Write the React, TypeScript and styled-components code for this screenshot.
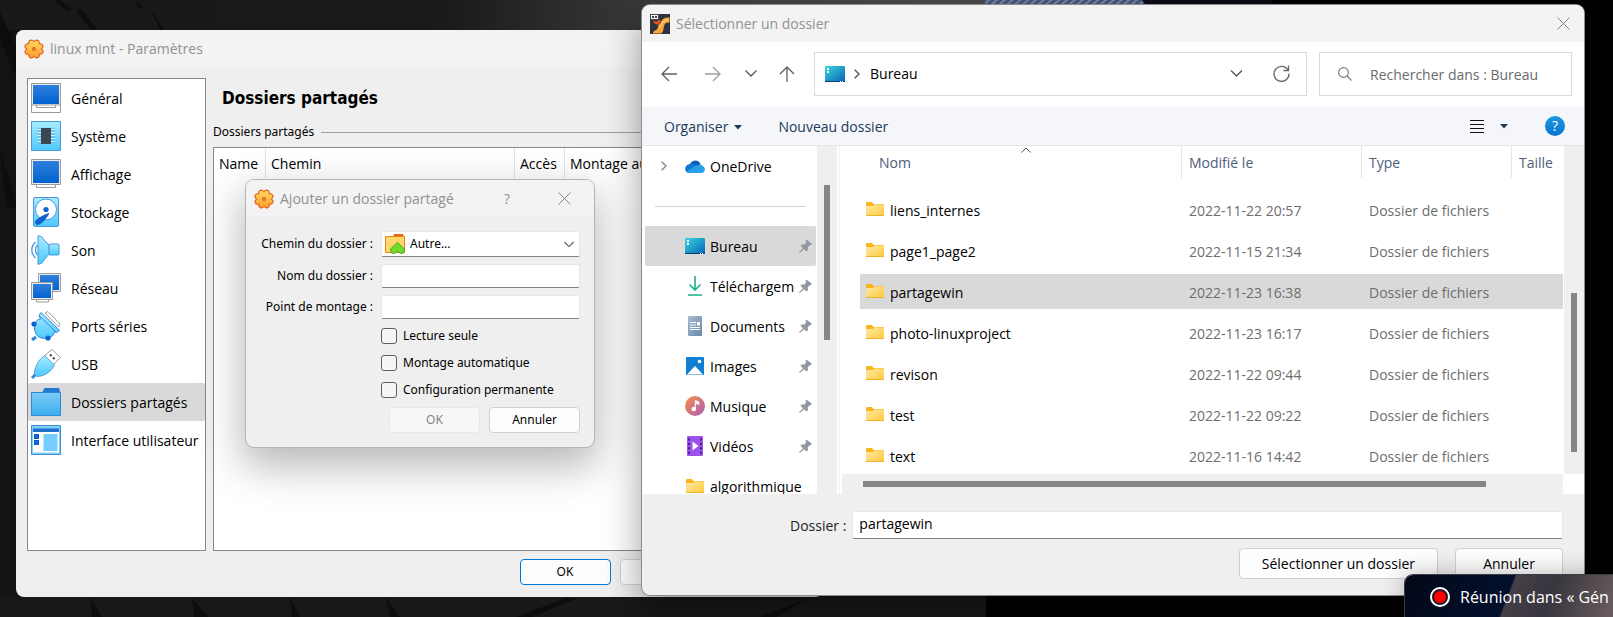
import React from "react";
import styled, { createGlobalStyle, css } from "styled-components";

const UI = `"Open Sans", "Noto Sans", sans-serif`;
const SMALL = `"Noto Sans", "Open Sans", sans-serif`;
const HEADING = `"DejaVu Sans Condensed", "DejaVu Sans", sans-serif`;

const Global = createGlobalStyle`
  *, *::before, *::after { box-sizing: border-box; }
  html, body { margin: 0; height: 100%; overflow: hidden; background: #000; }
  #root { height: 100%; }
  button, input, select { font: inherit; color: inherit; margin: 0; }
  svg { display: block; flex: none; }
`;

/* ---------- desktop ---------- */

const Desktop = styled.div`
  position: relative;
  height: 100vh;
  overflow: hidden;
  background: #000;
  font-family: ${UI};
  font-size: 14px;
  line-height: 20px;
  color: #000;
`;

const Wallpaper = styled.svg`
  position: absolute;
  inset: 0;
  width: 100%;
  height: 100%;
`;

const Window = styled.section`
  position: absolute;
  display: flex;
  flex-direction: column;
  overflow: hidden;
  border-radius: 8px;
  background: #efefef;
`;

const SettingsWindow = styled(Window)`
  left: 16px;
  top: 30px;
  bottom: 20px;
  width: 50%;
`;

const ShareWindow = styled(Window)`
  left: 246px;
  top: 180px;
  width: 348px;
  box-shadow: 0 0 0 1px #b4b4b4, 0 16px 40px 4px rgba(0, 0, 0, 0.28);
`;

const PickerWindow = styled(Window)`
  left: 642px;
  right: 29px;
  top: 5px;
  bottom: 22px;
  box-shadow: 0 0 0 1px #8c8c8c, 0 16px 36px 2px rgba(0, 0, 0, 0.36);
`;

const TitleBar = styled.header`
  display: flex;
  align-items: center;
  flex: none;
  height: 37px;
  padding: 0 8px;
  gap: 6px;
  background: #f3f3f3;
  color: #919191;
`;

const Title = styled.h1`
  flex: 1;
  margin: 0;
  font-size: 14px;
  font-weight: 400;
  white-space: nowrap;
`;

const IconButton = styled.button<{ $w?: number }>`
  display: flex;
  align-items: center;
  justify-content: center;
  flex: none;
  width: ${(p) => p.$w ?? 28}px;
  height: 28px;
  padding: 0;
  border: 0;
  background: none;
`;

const PushButton = styled.button<{ $primary?: boolean }>`
  min-width: 91px;
  height: 26px;
  padding: 0 8px;
  border: 1px solid ${(p) => (p.$primary ? "#0078d4" : "#d0d0d0")};
  border-radius: 4px;
  background: #fdfdfd;
  font-family: ${SMALL};
  font-size: 12px;
  white-space: nowrap;
  &:disabled {
    border-color: #e8e8e8;
    background: #f7f7f7;
    color: #838383;
  }
`;

/* ---------- settings window ---------- */

const SettingsBody = styled.div`
  display: flex;
  flex: 1;
  min-height: 0;
  gap: 7px;
  padding: 11px 10px 0 11px;
`;

const NavList = styled.nav`
  flex: none;
  width: 179px;
  border: 1px solid #828790;
  background: #fff;
`;

const NavItem = styled.a<{ $active?: boolean }>`
  display: flex;
  align-items: center;
  height: 38px;
  gap: 10px;
  padding: 0 3px;
  border-radius: 2px;
  color: #000;
  text-decoration: none;
  white-space: nowrap;
  background: ${(p) => (p.$active ? "#d9d9d9" : "none")};
`;

const NavLabel = styled.span`
  padding-top: 2px;
`;

const SettingsPane = styled.div`
  display: flex;
  flex: 1;
  flex-direction: column;
  min-width: 0;
`;

const PaneHeading = styled.h2`
  margin: 0;
  padding: 8px 9px 12px;
  font-family: ${HEADING};
  font-size: 17px;
  line-height: 24px;
`;

const GroupTitle = styled.h3`
  display: flex;
  align-items: center;
  gap: 7px;
  margin: 0;
  font-family: ${SMALL};
  font-size: 12px;
  font-weight: 400;
  line-height: 20px;
  &::after {
    content: "";
    flex: 1;
    height: 1px;
    background: #a0a0a0;
  }
`;

const ShareBox = styled.div`
  flex: 1;
  margin-top: 5px;
  border: 1px solid #828790;
  background: #fff;
`;

const ShareTable = styled.table`
  width: 100%;
  border-spacing: 0;
  table-layout: fixed;
  th {
    height: 30px;
    padding: 2px 5px 0;
    border-right: 1px solid #e2e2e2;
    font-weight: 400;
    text-align: left;
    white-space: nowrap;
  }
`;

const SettingsFooter = styled.footer`
  display: flex;
  justify-content: flex-end;
  gap: 9px;
  padding: 8px 12px 12px;
`;

/* ---------- share dialog ---------- */

const ShareForm = styled.form`
  display: flex;
  flex-direction: column;
  padding: 14px 14px 14px 6px;
  font-family: ${SMALL};
  font-size: 12px;
`;

const Fields = styled.div`
  display: flex;
  flex-direction: column;
  gap: 7px;
  margin-bottom: 3px;
`;

const FieldRow = styled.div`
  display: flex;
  align-items: center;
  label {
    flex: none;
    width: 129px;
    padding-right: 8px;
    text-align: right;
    white-space: nowrap;
  }
`;

const fieldLook = css`
  width: 100%;
  border: 1px solid #e6e6e6;
  border-bottom-color: #838383;
  border-radius: 2px;
  background: #fff;
  outline: 0;
`;

const TextField = styled.input`
  ${fieldLook}
  height: 24px;
  padding: 0 6px;
`;

const SelectWrap = styled.div`
  position: relative;
  flex: 1;
  svg {
    position: absolute;
    top: 3px;
    left: 4px;
    pointer-events: none;
  }
  svg + svg {
    top: 10px;
    right: 6px;
    left: auto;
  }
`;

const Select = styled.select`
  ${fieldLook}
  display: block;
  height: 26px;
  padding: 0 28px;
  appearance: none;
`;

const CheckRow = styled.label`
  display: flex;
  align-items: center;
  gap: 6px;
  height: 27px;
  margin-left: 129px;
`;

const CheckBox = styled.input`
  flex: none;
  width: 16px;
  height: 16px;
  border: 1px solid #606060;
  border-radius: 3px;
  background: #f5f5f5;
  appearance: none;
`;

const DialogButtons = styled.div`
  display: flex;
  justify-content: flex-end;
  gap: 9px;
  padding-top: 4px;
`;

/* ---------- folder picker ---------- */

const AddressRow = styled.div`
  display: flex;
  align-items: center;
  flex: none;
  height: 65px;
  padding: 0 12px 2px 13px;
  background: #fff;
`;

const NavButtons = styled.div`
  display: flex;
  align-items: center;
  gap: 8px;
  width: 159px;
`;

const AddressBar = styled.div`
  display: flex;
  align-items: center;
  flex: 1;
  height: 44px;
  margin-right: 12px;
  padding: 0 3px 0 10px;
  border: 1px solid #d9d9d9;
  gap: 9px;
`;

const AddressText = styled.span`
  flex: 1;
  padding-left: 1px;
`;

const SearchBox = styled.label`
  display: flex;
  align-items: center;
  flex: none;
  width: 253px;
  height: 44px;
  padding-left: 18px;
  gap: 18px;
  border: 1px solid #d9d9d9;
`;

const SearchInput = styled.input`
  flex: 1;
  min-width: 0;
  padding: 2px 0 0;
  border: 0;
  outline: 0;
  background: none;
  &::placeholder {
    color: #6a6a6a;
    opacity: 1;
  }
`;

const Toolbar = styled.div`
  display: flex;
  align-items: center;
  flex: none;
  height: 39px;
  padding: 0 19px 0 22px;
  border-bottom: 1px solid #e4e6e9;
  background: #f4f6f9;
`;

const ToolButton = styled.button`
  display: flex;
  align-items: center;
  gap: 6px;
  margin-right: 36px;
  padding: 2px 0 0;
  border: 0;
  background: none;
  color: #1e395b;
`;

const ToolbarEnd = styled.div`
  display: flex;
  align-items: center;
  gap: 3px;
  margin-left: auto;
`;

const HelpButton = styled.button`
  width: 20px;
  height: 20px;
  margin-left: 24px;
  padding: 0;
  border: 0;
  border-radius: 50%;
  background: linear-gradient(#1a96e4, #0a74cc);
  color: #fff;
`;

const Browser = styled.div`
  display: flex;
  flex: 1;
  min-height: 0;
  background: #fff;
`;

const Tree = styled.nav`
  flex: none;
  width: 175px;
  overflow: hidden;
`;

const TreeItem = styled.a<{ $active?: boolean }>`
  display: flex;
  align-items: center;
  height: 40px;
  margin: 0 1px 0 3px;
  padding: 0 4px 0 16px;
  border-radius: 2px;
  background: ${(p) => (p.$active ? "#d9d9d9" : "none")};
  color: #000;
  text-decoration: none;
`;

const TreeChevron = styled.span`
  flex: none;
  width: 24px;
`;

const TreeIcon = styled.span`
  display: flex;
  flex: none;
  justify-content: center;
  width: 20px;
`;

const TreeLabel = styled.span`
  flex: 1;
  margin: 0 4px 0 5px;
  padding-top: 2px;
  overflow: hidden;
  white-space: nowrap;
`;

const TreeRule = styled.hr`
  margin: 20px 11px 19px 13px;
  border: 0;
  border-top: 1px solid #d4d4d4;
`;

const VTrack = styled.div<{ $top: number; $size: number }>`
  flex: none;
  width: 20px;
  padding-top: ${(p) => p.$top}px;
  background: #efefef;
  &::before {
    content: "";
    display: block;
    width: 6px;
    height: ${(p) => p.$size}%;
    margin-left: 7px;
    background: #858585;
  }
`;

const FilePane = styled.div`
  display: flex;
  flex: 1;
  flex-direction: column;
  min-width: 0;
  margin-left: 2px;
  border-left: 1px solid #f3f3f3;
`;

const FileArea = styled.div`
  display: flex;
  flex: 1;
  min-height: 0;
  padding-left: 20px;
  overflow: hidden;
`;

const FileTable = styled.table`
  flex: 1;
  width: 100%;
  margin-right: 1px;
  border-spacing: 0;
  table-layout: fixed;
`;

const HeadCell = styled.th<{ $w?: number }>`
  width: ${(p) => (p.$w ? `${p.$w}px` : "auto")};
  height: 46px;
  padding: 0;
  color: #4c607a;
  font-weight: 400;
  text-align: left;
  vertical-align: top;
  span {
    display: flex;
    align-items: center;
    position: relative;
    height: 32px;
    padding-top: 2px;
    padding-left: ${(p) => (p.$w ? 7 : 19)}px;
    border-left: ${(p) => (p.$w ? "1px solid #e5e5e5" : "0")};
  }
  svg {
    position: absolute;
    top: 1px;
    left: 50%;
  }
`;

const FileRow = styled.tr<{ $active?: boolean }>`
  td {
    height: 41px;
    padding: 2px 0 0 8px;
    border-bottom: 6px solid transparent;
    background: ${(p) => (p.$active ? "#d9d9d9" : "none")};
    background-clip: padding-box;
    color: #6d6d6d;
    white-space: nowrap;
  }
  td:first-child {
    padding-left: 6px;
    color: #000;
  }
`;

const FileName = styled.span`
  display: flex;
  align-items: center;
  gap: 6px;
  svg {
    margin-bottom: 4px;
  }
`;

const HScroll = styled.div`
  display: flex;
  flex: none;
  height: 20px;
  margin: 0 21px 0 2px;
  padding: 7px 0 0 21px;
  background: #efefef;
  &::before {
    content: "";
    width: 89%;
    height: 6px;
    background: #858585;
  }
`;

const PickerFooter = styled.footer`
  display: flex;
  flex: none;
  flex-direction: column;
  gap: 9px;
  padding: 17px 21px 16px 148px;
`;

const FolderField = styled.div`
  display: flex;
  align-items: center;
  gap: 6px;
  color: #222;
  white-space: nowrap;
  label {
    padding-top: 2px;
  }
`;

const FolderInput = styled.input`
  ${fieldLook}
  height: 28px;
  padding: 0 6px 3px;
  color: #000;
`;

const PickerButtons = styled.div`
  display: flex;
  justify-content: flex-end;
  gap: 17px;
`;

const PickerButton = styled(PushButton)`
  min-width: 108px;
  height: 31px;
  padding: 0 22px;
  font-family: ${UI};
  font-size: 14px;
`;

const Toast = styled.aside`
  position: absolute;
  right: 0;
  bottom: 0;
  display: flex;
  align-items: center;
  gap: 10px;
  width: 208px;
  height: 42px;
  padding: 2px 0 0 25px;
  border-top-left-radius: 8px;
  background: linear-gradient(111deg, #020818 0%, #04102c 49%, #463f48 50%, #37353d 68%, #6a5d5f 100%);
  box-shadow: 0 0 0 1px #3a3d45, 0 0 24px rgba(0, 0, 0, 0.3);
  color: #fff;
  font-size: 16px;
  white-space: nowrap;
`;

/* ---------- icons ---------- */

const LOBES = [0, 45, 90, 135, 180, 225, 270, 315];

const Gear = () => (
  <svg width="20" height="20" viewBox="0 0 20 20">
    <defs>
      <linearGradient id="gear" gradientUnits="userSpaceOnUse" x1="0" y1="1" x2="0" y2="19">
        <stop offset="0" stopColor="#ffdc60" />
        <stop offset="1" stopColor="#ff9c2c" />
      </linearGradient>
    </defs>
    <g fill="#e2601c">
      {LOBES.map((a) => (
        <circle key={a} cx="10" cy="3" r="3" transform={`rotate(${a + 22} 10 10)`} />
      ))}
      <circle cx="10" cy="10" r="8" />
    </g>
    {LOBES.map((a) => {
      const t = ((a + 22) * Math.PI) / 180;
      return <circle key={a} cx={10 + 6.6 * Math.sin(t)} cy={10 - 6.6 * Math.cos(t)} r="2.2" fill="url(#gear)" />;
    })}
    <circle cx="10" cy="10" r="6.8" fill="url(#gear)" />
    <circle cx="10" cy="10" r="2" fill="#d65a1c" />
    <circle cx="10" cy="10" r="0.8" fill="#ffb43c" />
  </svg>
);

const Cross = () => (
  <svg width="13" height="13" viewBox="0 0 13 13" stroke="#858585" fill="none">
    <path d="M.5 .5l12 12M12.5 .5l-12 12" />
  </svg>
);

const SharedGradients = () => (
  <svg width="0" height="0" aria-hidden="true">
    <defs>
      <linearGradient id="screen" x1="0" y1="0" x2="0" y2="1">
        <stop offset="0" stopColor="#2f7fdc" />
        <stop offset="1" stopColor="#0062d0" />
      </linearGradient>
      <linearGradient id="sky" x1="0" y1="0" x2="0" y2="1">
        <stop offset="0" stopColor="#a8ecff" />
        <stop offset="1" stopColor="#4cc8ff" />
      </linearGradient>
      <linearGradient id="blueFolder" x1="0" y1="0" x2="0" y2="1">
        <stop offset="0" stopColor="#7fcbf5" />
        <stop offset="1" stopColor="#38aef0" />
      </linearGradient>
      <linearGradient id="yellow" x1="0" y1="0" x2="1" y2="1">
        <stop offset="0" stopColor="#ffe9a6" />
        <stop offset="1" stopColor="#ffc93c" />
      </linearGradient>
      <linearGradient id="desk" x1="0" y1="0" x2="1" y2="1">
        <stop offset="0" stopColor="#35d6dc" />
        <stop offset="1" stopColor="#0a63b8" />
      </linearGradient>
    </defs>
  </svg>
);

const navIcon = (children: React.ReactNode) => (
  <svg width="30" height="30" viewBox="0 0 30 30">
    {children}
  </svg>
);

const NAV_ICONS = {
  general: navIcon(
    <>
      <path d="M.5 22v7.500h29V22" fill="#fff" stroke="#9b9b9b" />
      <path d="M5.500 22v2.500h19V22" fill="#fff" stroke="#9b9b9b" />
      <path d="M.5 .5h29v21.500h-29z" fill="#ececec" stroke="#9b9b9b" />
      <path d="M2 2h26v19H2z" fill="url(#screen)" />
    </>
  ),
  system: navIcon(
    <>
      <path d="M.5 .5h29v29h-29z" fill="url(#sky)" stroke="#4a98d8" />
      <path d="M6 8.500h18M6 11.500h18M6 14.500h18M6 17.500h18M6 20.500h18" stroke="#4aa8dc" strokeWidth="2" />
      <path d="M6 8.500h18M6 11.500h18M6 14.500h18M6 17.500h18M6 20.500h18" stroke="#d6f5ff" />
      <rect x="10" y="7" width="10" height="16" fill="#3c4550" />
    </>
  ),
  display: navIcon(
    <>
      <path d="M5.500 25v3.500h19V25" fill="#fff" stroke="#9b9b9b" />
      <path d="M.5 .5h29v25h-29z" fill="#ececec" stroke="#9b9b9b" />
      <path d="M2 2h26v22H2z" fill="url(#screen)" />
    </>
  ),
  storage: navIcon(
    <>
      <rect x="2.500" y=".5" width="25" height="29" rx="1.500" fill="url(#sky)" stroke="#4a98d8" />
      <circle cx="15" cy="12.500" r="10.500" fill="#fff" stroke="#4a98d8" />
      <circle cx="15" cy="12.500" r="2.600" fill="#0e62cc" />
      <path d="M18 16.500C15 17 9 20 5.500 23c-2 2-1 5 1.500 4.500 4-.5 8-6 11-11z" fill="#0e62cc" stroke="#0a52b0" strokeWidth=".6" />
    </>
  ),
  sound: navIcon(
    <>
      <path d="M4.500 7C-.5 12-.5 18 4.500 23M6.500 10C4 13 4 17 6.500 20" fill="none" stroke="#4a98d8" strokeWidth="1.300" />
      <rect x="18" y="9" width="10" height="11" rx="1" fill="url(#sky)" stroke="#4a98d8" />
      <path d="M7 .8c3 .2 4.500 1 6 4.200l5 5v9l-5 6c-1.500 3-3 4-6 4.300z" fill="url(#sky)" stroke="#4a98d8" />
    </>
  ),
  network: navIcon(
    <>
      <path d="M7.500 .5h22v18h-22z" fill="#ececec" stroke="#9b9b9b" />
      <path d="M9 2h19v15H9z" fill="url(#screen)" />
      <path d="M5.500 26v3h12v-3" fill="#fff" stroke="#9b9b9b" />
      <path d="M.5 9.500h21v17h-21z" fill="#ececec" stroke="#9b9b9b" />
      <path d="M2 11h18v14H2z" fill="url(#screen)" />
    </>
  ),
  ports: navIcon(
    <>
      <path d="M14 2l3-1.500 12 12.500-1.500 3z" fill="#fff" stroke="#9b9b9b" />
      <path d="M5 26l-4 3" stroke="#2a86d8" strokeWidth="3" />
      <path d="M10 1.500l18.500 18-3 2-2.500-1c0 3-1 4.500-3 5.500-4 2-9 2-13-.5C3 21 2.500 15 5 10.500 6 9 8 8 9.500 8L8 4.500z" fill="url(#sky)" stroke="#2f86d4" />
      <path d="M8.500 5L25 21" stroke="#2f86d4" />
      <circle cx="3" cy="13" r="2.600" fill="#0e62cc" />
      <circle cx="17" cy="27" r="2.600" fill="#0e62cc" />
    </>
  ),
  usb: navIcon(
    <>
      <path d="M13 7l8-6.500 8.500 8L22 16z" fill="#fff" stroke="#9b9b9b" />
      <path d="M19 5.500l1.600 1.600M22 8.500l1.600 1.600" stroke="#444" strokeWidth="2" />
      <path d="M5 25l-4 4" stroke="#2a86d8" strokeWidth="3" />
      <path d="M13.500 6.500L23.500 16c-3 6-9 10.500-16 11.500-2 .2-4-1.500-4-4 .5-7 5-13.500 10-17z" fill="url(#sky)" stroke="#5aa0dc" />
    </>
  ),
  folders: navIcon(
    <>
      <path d="M11 6l2.500-5h14.500l1.500 5z" fill="#2478d4" />
      <path d="M.5 5.500h29v23h-29z" fill="url(#blueFolder)" stroke="#2d8ad8" />
    </>
  ),
  ui: navIcon(
    <>
      <path d="M.5 .5h29v29h-29z" fill="#7fd0f6" stroke="#3f8fd6" />
      <path d="M2 7h26v20.500H2z" fill="#fff" />
      <path d="M2 3.500h26V7H2z" fill="#1f6fd0" />
      <path d="M3 9h5v5H3zM3 15h5v5H3z" fill="#0e62cc" />
      <path d="M12.500 9h14v17h-14z" fill="#74cfff" />
    </>
  ),
};

const Folder = () => (
  <svg width="18" height="14" viewBox="0 0 18 14">
    <path d="M0 1a1 1 0 0 1 1-1h5l1.500 2H18v11H0z" fill="#f8b61c" />
    <path d="M0 4h7l1.500-1.500H18V13a1 1 0 0 1-1 1H1a1 1 0 0 1-1-1z" fill="url(#yellow)" />
    <path d="M0 13.500h18" stroke="#eeb12c" />
  </svg>
);

const DeskIcon = () => (
  <svg width="20" height="16" viewBox="0 0 20 16">
    <rect width="20" height="16" rx="1" fill="url(#desk)" />
    <path d="M2 2h2v2H2zM2 5h2v2H2z" fill="#fff" />
    <path d="M0 15.500h20" stroke="#0a3c74" />
    <path d="M15 15.500h1M17 15.500h1" stroke="#fff" />
  </svg>
);

const OtherFolder = () => (
  <svg width="20" height="20" viewBox="0 0 20 20">
    <path d="M8 3l1-3h9l1 3z" fill="#e8641e" />
    <path d="M.5 2.500h19v16h-19z" fill="#ffd768" stroke="#e0841e" />
    <path d="M12.500 8.500l7 6.500-1 4-3 .5-3-2.500-3 2.500-3-.5-1-4z" fill="#6fdc2c" stroke="#4aa81c" />
  </svg>
);

const Virtual = () => (
  <svg width="20" height="20" viewBox="0 0 20 20">
    <path d="M0 0h20v20H0z" fill="#2f3240" />
    <path d="M19.500 3.500v5c-3.500 0-5 1-5.500 3.500-.5 4-1 6.500-3 7.500H3c0-3.500 5-3 5-6.500 0-2.500 2-2.500 3-5 1-3 4-5 8.500-4.500z" fill="#f9a63a" />
    <path d="M3 6.500c1.500 1.500 4 1.500 5.500-.5l2.500.5-2 4c-3 .5-5.500-1-6-4z" fill="#e8501c" />
    <path d="M9.500 13.500l3.500-6 5-2" stroke="#ffdf8c" fill="none" />
    <path d="M.5 .5h8v5h-8z" fill="#f4f4f4" stroke="#44464e" />
    <path d="M2 3h2M5 3h2" stroke="#44464e" strokeWidth="2" />
  </svg>
);

const Pin = () => (
  <svg width="13" height="14" viewBox="0 0 13 14">
    <path d="M7.500 .5L13 5l-1 1.200-1.200-.2-2 2.500.2 2.500-1.500 1.500-2.500-2.300L.8 14 0 13.200l4-4L1.500 6.800 3 5.300l2.600.2L7.300 3 6.500 1.700z" fill="#8f9aa5" />
  </svg>
);

const ChevronDown = ({ w = 12 }: { w?: number }) => (
  <svg width={w} height="7" viewBox="0 0 12 7" fill="none" stroke="#555" strokeWidth="1.300">
    <path d="M.5 .5L6 6 11.500 .5" />
  </svg>
);

const ChevronRight = ({ color = "#555" }: { color?: string }) => (
  <svg width="6" height="10" viewBox="0 0 6 10" fill="none" stroke={color} strokeWidth="1.400">
    <path d="M.7 .7L5 5 .7 9.300" />
  </svg>
);

const Arrow = ({ turn, color }: { turn: number; color: string }) => (
  <svg width="16" height="16" viewBox="0 0 16 16" fill="none" stroke={color} strokeWidth="1.300">
    <path d="M16 8H1M8 1L1 8l7 7" transform={`rotate(${turn} 8 8)`} />
  </svg>
);

const Caret = () => (
  <svg width="8" height="5" viewBox="0 0 8 5">
    <path d="M0 0h8L4 4.500z" fill="#1e395b" />
  </svg>
);

const Cloud = () => (
  <svg width="20" height="13" viewBox="0 0 20 13">
    <path d="M5 4C7 0 13-1.500 15.500 4L11 8z" fill="#0a5cb8" />
    <path d="M4 13C-1 13-1.500 4.500 5 4c3-.8 5 1 8 2.800L7 13z" fill="#0f78d4" />
    <path d="M4 13c-1-1-1.500-1.500-1.500-1.500C5 9 10 6 13 5c3-1 4-.5 4 .8 4 1 4 7-1 7.200z" fill="#28a0e8" />
  </svg>
);

const TREE_ICONS = {
  download: (
    <svg width="20" height="20" viewBox="0 0 20 20" fill="none" stroke="#1bb08c" strokeWidth="1.600">
      <path d="M10 0v14M4.500 8.500L10 14l5.500-5.500M3 19h14" />
    </svg>
  ),
  documents: (
    <svg width="20" height="20" viewBox="0 0 20 20">
      <defs>
        <linearGradient id="doc" x1="0" y1="0" x2="1" y2="1">
          <stop offset="0" stopColor="#a9bdd2" />
          <stop offset="1" stopColor="#6886a8" />
        </linearGradient>
      </defs>
      <rect x="3" width="14" height="20" rx="1" fill="url(#doc)" />
      <path d="M5 6.500h6M5 9h6M5 11.500h10" stroke="#fff" fill="none" />
      <path d="M12 6h3v3.500h-3zM5 13h10v1H5z" fill="#fff" />
    </svg>
  ),
  images: (
    <svg width="20" height="20" viewBox="0 0 20 20">
      <rect x="1" y="1" width="18" height="18" rx="1" fill="#1180d4" />
      <path d="M2 18.500l8-8.500 8 8.500z" fill="#fff" />
      <circle cx="14.500" cy="5.500" r="1.800" fill="#fff" />
    </svg>
  ),
  music: (
    <svg width="20" height="20" viewBox="0 0 20 20">
      <defs>
        <linearGradient id="music" x1="0" y1="0" x2="1" y2="1">
          <stop offset="0.100" stopColor="#f28a54" />
          <stop offset="1" stopColor="#a85cb8" />
        </linearGradient>
      </defs>
      <circle cx="10" cy="10" r="10" fill="url(#music)" />
      <circle cx="8.800" cy="13" r="2.300" fill="#fff" />
      <path d="M10.300 13V4.500l3.500 1.500v2.500l-2.500-1" fill="#fff" stroke="#fff" />
    </svg>
  ),
  videos: (
    <svg width="20" height="20" viewBox="0 0 20 20">
      <rect x="2" width="16" height="20" rx="1" fill="#9a52ea" />
      <path d="M4 2.500v16M16 2.500v16" stroke="#3c1a70" strokeWidth="1.800" strokeDasharray="2 2.400" />
      <path d="M7.500 5.500l6 4.500-6 4.500z" fill="#fff" />
    </svg>
  ),
};

/* ---------- data ---------- */

const NAV: { icon: keyof typeof NAV_ICONS; label: string }[] = [
  { icon: "general", label: "Général" },
  { icon: "system", label: "Système" },
  { icon: "display", label: "Affichage" },
  { icon: "storage", label: "Stockage" },
  { icon: "sound", label: "Son" },
  { icon: "network", label: "Réseau" },
  { icon: "ports", label: "Ports séries" },
  { icon: "usb", label: "USB" },
  { icon: "folders", label: "Dossiers partagés" },
  { icon: "ui", label: "Interface utilisateur" },
];

const TREE: { icon: React.ReactNode; label: string; pinned: boolean }[] = [
  { icon: <DeskIcon />, label: "Bureau", pinned: true },
  { icon: TREE_ICONS.download, label: "Téléchargements", pinned: true },
  { icon: TREE_ICONS.documents, label: "Documents", pinned: true },
  { icon: TREE_ICONS.images, label: "Images", pinned: true },
  { icon: TREE_ICONS.music, label: "Musique", pinned: true },
  { icon: TREE_ICONS.videos, label: "Vidéos", pinned: true },
  { icon: <Folder />, label: "algorithmique", pinned: false },
];

const FILES = [
  ["liens_internes", "2022-11-22 20:57"],
  ["page1_page2", "2022-11-15 21:34"],
  ["partagewin", "2022-11-23 16:38"],
  ["photo-linuxproject", "2022-11-23 16:17"],
  ["revison", "2022-11-22 09:44"],
  ["test", "2022-11-22 09:22"],
  ["text", "2022-11-16 14:42"],
];

const OPTIONS = ["Lecture seule", "Montage automatique", "Configuration permanente"];

/* ---------- windows ---------- */

const Settings = () => (
  <SettingsWindow>
    <TitleBar>
      <Gear />
      <Title>linux mint - Paramètres</Title>
    </TitleBar>
    <SettingsBody>
      <NavList>
        {NAV.map((n) => (
          <NavItem key={n.icon} href="#" $active={n.icon === "folders"}>
            {NAV_ICONS[n.icon]}
            <NavLabel>{n.label}</NavLabel>
          </NavItem>
        ))}
      </NavList>
      <SettingsPane>
        <PaneHeading>Dossiers partagés</PaneHeading>
        <GroupTitle>Dossiers partagés</GroupTitle>
        <ShareBox>
          <ShareTable>
            <colgroup>
              <col width="52" />
              <col width="249" />
              <col width="50" />
              <col />
            </colgroup>
            <thead>
              <tr>
                <th>Name</th>
                <th>Chemin</th>
                <th>Accès</th>
                <th>Montage automatique</th>
              </tr>
            </thead>
          </ShareTable>
        </ShareBox>
      </SettingsPane>
    </SettingsBody>
    <SettingsFooter>
      <PushButton $primary>OK</PushButton>
      <PushButton>Annuler</PushButton>
      <PushButton>Aide</PushButton>
    </SettingsFooter>
  </SettingsWindow>
);

const AddShare = () => (
  <ShareWindow>
    <TitleBar>
      <Gear />
      <Title>Ajouter un dossier partagé</Title>
      <IconButton $w={58} aria-label="Aide">
        ?
      </IconButton>
      <IconButton $w={44} aria-label="Fermer">
        <Cross />
      </IconButton>
    </TitleBar>
    <ShareForm>
      <Fields>
        <FieldRow>
          <label htmlFor="path">Chemin du dossier :</label>
          <SelectWrap>
            <Select id="path">
              <option>Autre...</option>
            </Select>
            <OtherFolder />
            <ChevronDown w={10} />
          </SelectWrap>
        </FieldRow>
        <FieldRow>
          <label htmlFor="name">Nom du dossier :</label>
          <TextField id="name" />
        </FieldRow>
        <FieldRow>
          <label htmlFor="mount">Point de montage :</label>
          <TextField id="mount" />
        </FieldRow>
      </Fields>
      {OPTIONS.map((o) => (
        <CheckRow key={o}>
          <CheckBox type="checkbox" />
          {o}
        </CheckRow>
      ))}
      <DialogButtons>
        <PushButton type="button" disabled>
          OK
        </PushButton>
        <PushButton type="button">Annuler</PushButton>
      </DialogButtons>
    </ShareForm>
  </ShareWindow>
);

const Picker = () => (
  <PickerWindow>
    <TitleBar>
      <Virtual />
      <Title>Sélectionner un dossier</Title>
      <IconButton $w={26} aria-label="Fermer">
        <Cross />
      </IconButton>
    </TitleBar>
    <AddressRow>
      <NavButtons>
        <IconButton aria-label="Précédent">
          <Arrow turn={0} color="#5f5f5f" />
        </IconButton>
        <IconButton $w={44} aria-label="Suivant">
          <Arrow turn={180} color="#a0a0a0" />
        </IconButton>
        <IconButton $w={16} aria-label="Emplacements récents">
          <ChevronDown />
        </IconButton>
        <IconButton $w={40} aria-label="Dossier parent">
          <Arrow turn={90} color="#5f5f5f" />
        </IconButton>
      </NavButtons>
      <AddressBar>
        <DeskIcon />
        <ChevronRight />
        <AddressText>Bureau</AddressText>
        <IconButton aria-label="Historique">
          <ChevronDown w={13} />
        </IconButton>
        <IconButton $w={44} aria-label="Actualiser">
          <svg width="17" height="17" viewBox="0 0 17 17" fill="none" stroke="#666" strokeWidth="1.300">
            <path d="M15.200 5.500A7.500 7.500 0 1 0 16 8.500M15.500 .5v5h-5" />
          </svg>
        </IconButton>
      </AddressBar>
      <SearchBox>
        <svg width="14" height="14" viewBox="0 0 14 14" fill="none" stroke="#777" strokeWidth="1.100">
          <circle cx="5.500" cy="5.500" r="4.900" />
          <path d="M9 9l4.500 4.500" />
        </svg>
        <SearchInput aria-label="Rechercher" placeholder="Rechercher dans : Bureau" />
      </SearchBox>
    </AddressRow>
    <Toolbar>
      <ToolButton>
        Organiser
        <Caret />
      </ToolButton>
      <ToolButton>Nouveau dossier</ToolButton>
      <ToolbarEnd>
        <IconButton $w={20} aria-label="Affichage">
          <svg width="14" height="13" viewBox="0 0 14 13" stroke="#111">
            <path d="M0 .5h14M0 4.500h14M0 8.500h14M0 12.500h14" />
          </svg>
        </IconButton>
        <IconButton aria-label="Autres options">
          <Caret />
        </IconButton>
        <HelpButton aria-label="Aide">?</HelpButton>
      </ToolbarEnd>
    </Toolbar>
    <Browser>
      <Tree>
        <TreeItem href="#">
          <TreeChevron>
            <ChevronRight color="#8a8a8a" />
          </TreeChevron>
          <TreeIcon>
            <Cloud />
          </TreeIcon>
          <TreeLabel>OneDrive</TreeLabel>
        </TreeItem>
        <TreeRule />
        {TREE.map((t) => (
          <TreeItem key={t.label} href="#" $active={t.label === "Bureau"}>
            <TreeChevron />
            <TreeIcon>{t.icon}</TreeIcon>
            <TreeLabel>{t.label}</TreeLabel>
            {t.pinned && <Pin />}
          </TreeItem>
        ))}
      </Tree>
      <VTrack $top={39} $size={50} />
      <FilePane>
        <FileArea>
          <FileTable>
            <thead>
              <tr>
                <HeadCell>
                  <span>
                    Nom
                    <svg width="10" height="6" viewBox="0 0 10 6" fill="none" stroke="#555">
                      <path d="M.5 5.500L5 1l4.500 4.500" />
                    </svg>
                  </span>
                </HeadCell>
                <HeadCell $w={180}>
                  <span>Modifié le</span>
                </HeadCell>
                <HeadCell $w={150}>
                  <span>Type</span>
                </HeadCell>
                <HeadCell $w={52}>
                  <span>Taille</span>
                </HeadCell>
              </tr>
            </thead>
            <tbody>
              {FILES.map(([name, date]) => (
                <FileRow key={name} $active={name === "partagewin"}>
                  <td>
                    <FileName>
                      <Folder />
                      {name}
                    </FileName>
                  </td>
                  <td>{date}</td>
                  <td>Dossier de fichiers</td>
                  <td />
                </FileRow>
              ))}
            </tbody>
          </FileTable>
          <VTrack $top={147} $size={88} />
        </FileArea>
        <HScroll />
      </FilePane>
    </Browser>
    <PickerFooter>
      <FolderField>
        <label htmlFor="folder">Dossier :</label>
        <FolderInput id="folder" defaultValue="partagewin" />
      </FolderField>
      <PickerButtons>
        <PickerButton>Sélectionner un dossier</PickerButton>
        <PickerButton>Annuler</PickerButton>
      </PickerButtons>
    </PickerFooter>
  </PickerWindow>
);

export default function App() {
  return (
    <Desktop>
      <Global />
      <SharedGradients />
      <Wallpaper viewBox="0 0 1613 617" preserveAspectRatio="none">
        <defs>
          <pattern id="stripes" width="5" height="5" patternUnits="userSpaceOnUse" patternTransform="rotate(50)">
            <path d="M0 0h5v5H0z" fill="#46557c" />
            <path d="M0 0h1.500v5H0z" fill="#8794b2" />
          </pattern>
          <linearGradient id="night" x1="0" x2="1">
            <stop offset="0" stopColor="#181818" />
            <stop offset="0.450" stopColor="#1a1a1a" />
            <stop offset="0.700" stopColor="#404040" />
            <stop offset="1" stopColor="#4c4c4c" />
          </linearGradient>
        </defs>
        <path d="M0 0h986v617H0z" fill="#131313" />
        <path d="M0 0h986v30H0z" fill="url(#night)" />
        <path d="M0 597h986v20H0z" fill="#181818" />
        <path
          d="M60 0l12 10h-6L54 0zM80 8l18 22h-7L77 13zM136 0l7 8h-5zM150 7l14 23h-4zM0 12l16 34v30L0 40zM0 150l16 50v8L6 206zM90 598l12 19h-10zM192 598l16 19h-14zM290 598l10 19h-8zM386 598l14 19h-10zM566 598l-50 19h16l46-19zM810 598l-50 19h16z"
          fill="#0d0d0d"
        />
        <path d="M985 0h157l4 5H985z" fill="url(#stripes)" />
        <path d="M1142 0h130v5h-126z" fill="#0a0b16" />
      </Wallpaper>
      <Settings />
      <AddShare />
      <Picker />
      <Toast>
        <svg width="20" height="20" viewBox="0 0 20 20">
          <circle cx="10" cy="10" r="9" fill="#1a1a28" stroke="#fff" strokeWidth="2" />
          <circle cx="10" cy="10" r="6" fill="#f00" />
        </svg>
        Réunion dans « Gén
      </Toast>
    </Desktop>
  );
}
